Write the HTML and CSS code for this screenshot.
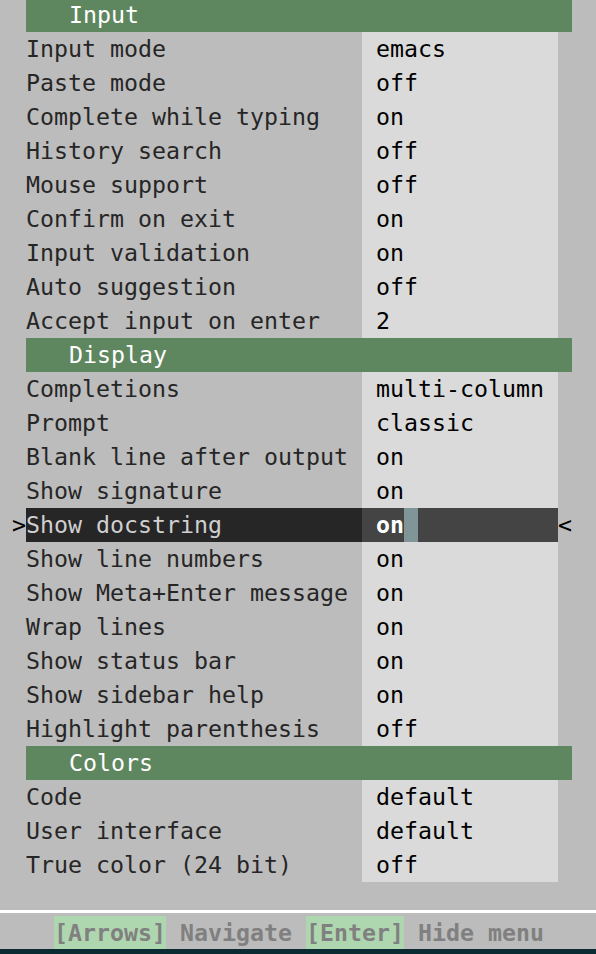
FILE: index.html
```html
<!DOCTYPE html>
<html>
<head>
<meta charset="utf-8">
<link rel="stylesheet" href="styles.css">
</head>
<body>
<div class="screen">
  <div class="row"><div class="gutter"></div><div class="header">Input</div></div>
  <div class="row"><div class="gutter"></div><div class="label">Input mode</div><div class="value">emacs</div></div>
  <div class="row"><div class="gutter"></div><div class="label">Paste mode</div><div class="value">off</div></div>
  <div class="row"><div class="gutter"></div><div class="label">Complete while typing</div><div class="value">on</div></div>
  <div class="row"><div class="gutter"></div><div class="label">History search</div><div class="value">off</div></div>
  <div class="row"><div class="gutter"></div><div class="label">Mouse support</div><div class="value">off</div></div>
  <div class="row"><div class="gutter"></div><div class="label">Confirm on exit</div><div class="value">on</div></div>
  <div class="row"><div class="gutter"></div><div class="label">Input validation</div><div class="value">on</div></div>
  <div class="row"><div class="gutter"></div><div class="label">Auto suggestion</div><div class="value">off</div></div>
  <div class="row"><div class="gutter"></div><div class="label">Accept input on enter</div><div class="value">2</div></div>
  <div class="row"><div class="gutter"></div><div class="header">Display</div></div>
  <div class="row"><div class="gutter"></div><div class="label">Completions</div><div class="value">multi-column</div></div>
  <div class="row"><div class="gutter"></div><div class="label">Prompt</div><div class="value">classic</div></div>
  <div class="row"><div class="gutter"></div><div class="label">Blank line after output</div><div class="value">on</div></div>
  <div class="row"><div class="gutter"></div><div class="label">Show signature</div><div class="value">on</div></div>
  <div class="row selected"><div class="gutter">&gt;</div><div class="label">Show docstring</div><div class="value"><span class="cur-text">on</span><span class="cursor"></span></div><div class="rmark">&lt;</div></div>
  <div class="row"><div class="gutter"></div><div class="label">Show line numbers</div><div class="value">on</div></div>
  <div class="row"><div class="gutter"></div><div class="label">Show Meta+Enter message</div><div class="value">on</div></div>
  <div class="row"><div class="gutter"></div><div class="label">Wrap lines</div><div class="value">on</div></div>
  <div class="row"><div class="gutter"></div><div class="label">Show status bar</div><div class="value">on</div></div>
  <div class="row"><div class="gutter"></div><div class="label">Show sidebar help</div><div class="value">on</div></div>
  <div class="row"><div class="gutter"></div><div class="label">Highlight parenthesis</div><div class="value">off</div></div>
  <div class="row"><div class="gutter"></div><div class="header">Colors</div></div>
  <div class="row"><div class="gutter"></div><div class="label">Code</div><div class="value">default</div></div>
  <div class="row"><div class="gutter"></div><div class="label">User interface</div><div class="value">default</div></div>
  <div class="row"><div class="gutter"></div><div class="label">True color (24 bit)</div><div class="value">off</div></div>
  <div class="spacer"></div>
  <div class="separator"></div>
  <div class="status"><span class="key">[Arrows]</span><span class="desc"> Navigate </span><span class="key">[Enter]</span><span class="desc"> Hide menu</span></div>
  <div class="bottom"></div>
</div>
</body>
</html>
```
FILE: styles.css
```css
html, body {
  margin: 0;
  padding: 0;
  background: #bcbcbc;
  overflow: hidden;
}

.screen {
  width: 596px;
  height: 956px;
  margin-top: -2px;
  font-family: "DejaVu Sans Mono", "Liberation Mono", monospace;
  font-size: 23.25px;
  color: #262626;
  display: flex;
  flex-direction: column;
  overflow: hidden;
}

.row {
  display: flex;
  height: 34px;
  line-height: 34px;
  white-space: pre;
  flex: none;
}

.gutter {
  width: 26px;
  flex: none;
  text-align: right;
  color: #000;
}

.header {
  width: 546px;
  padding-left: 43px;
  box-sizing: border-box;
  background: #5f875f;
  color: #ffffff;
}

.label {
  width: 336px;
  flex: none;
}

.value {
  width: 196px;
  flex: none;
  padding-left: 14px;
  box-sizing: border-box;
  background: #dadada;
  color: #000;
  display: flex;
}

.rmark {
  width: 14px;
  color: #000;
}

.selected .label {
  background: #262626;
  color: #d0d0d0;
}

.selected .value {
  background: #444444;
  color: #ffffff;
}

.cur-text {
  font-weight: bold;
}

.cursor {
  width: 14px;
  background: #7f9598;
}

.spacer {
  height: 28px;
  flex: none;
}

.separator {
  height: 3px;
  background: #ffffff;
  flex: none;
}

.status {
  height: 34px;
  line-height: 34px;
  margin-top: 3px;
  padding-left: 54px;
  white-space: pre;
  color: #808080;
  font-weight: bold;
  flex: none;
}

.key {
  background: #afd7af;
  display: inline-block;
  height: 34px;
}

.bottom {
  height: 10px;
  margin-top: -1px;
  background: #0b2b33;
  flex: none;
}
```
